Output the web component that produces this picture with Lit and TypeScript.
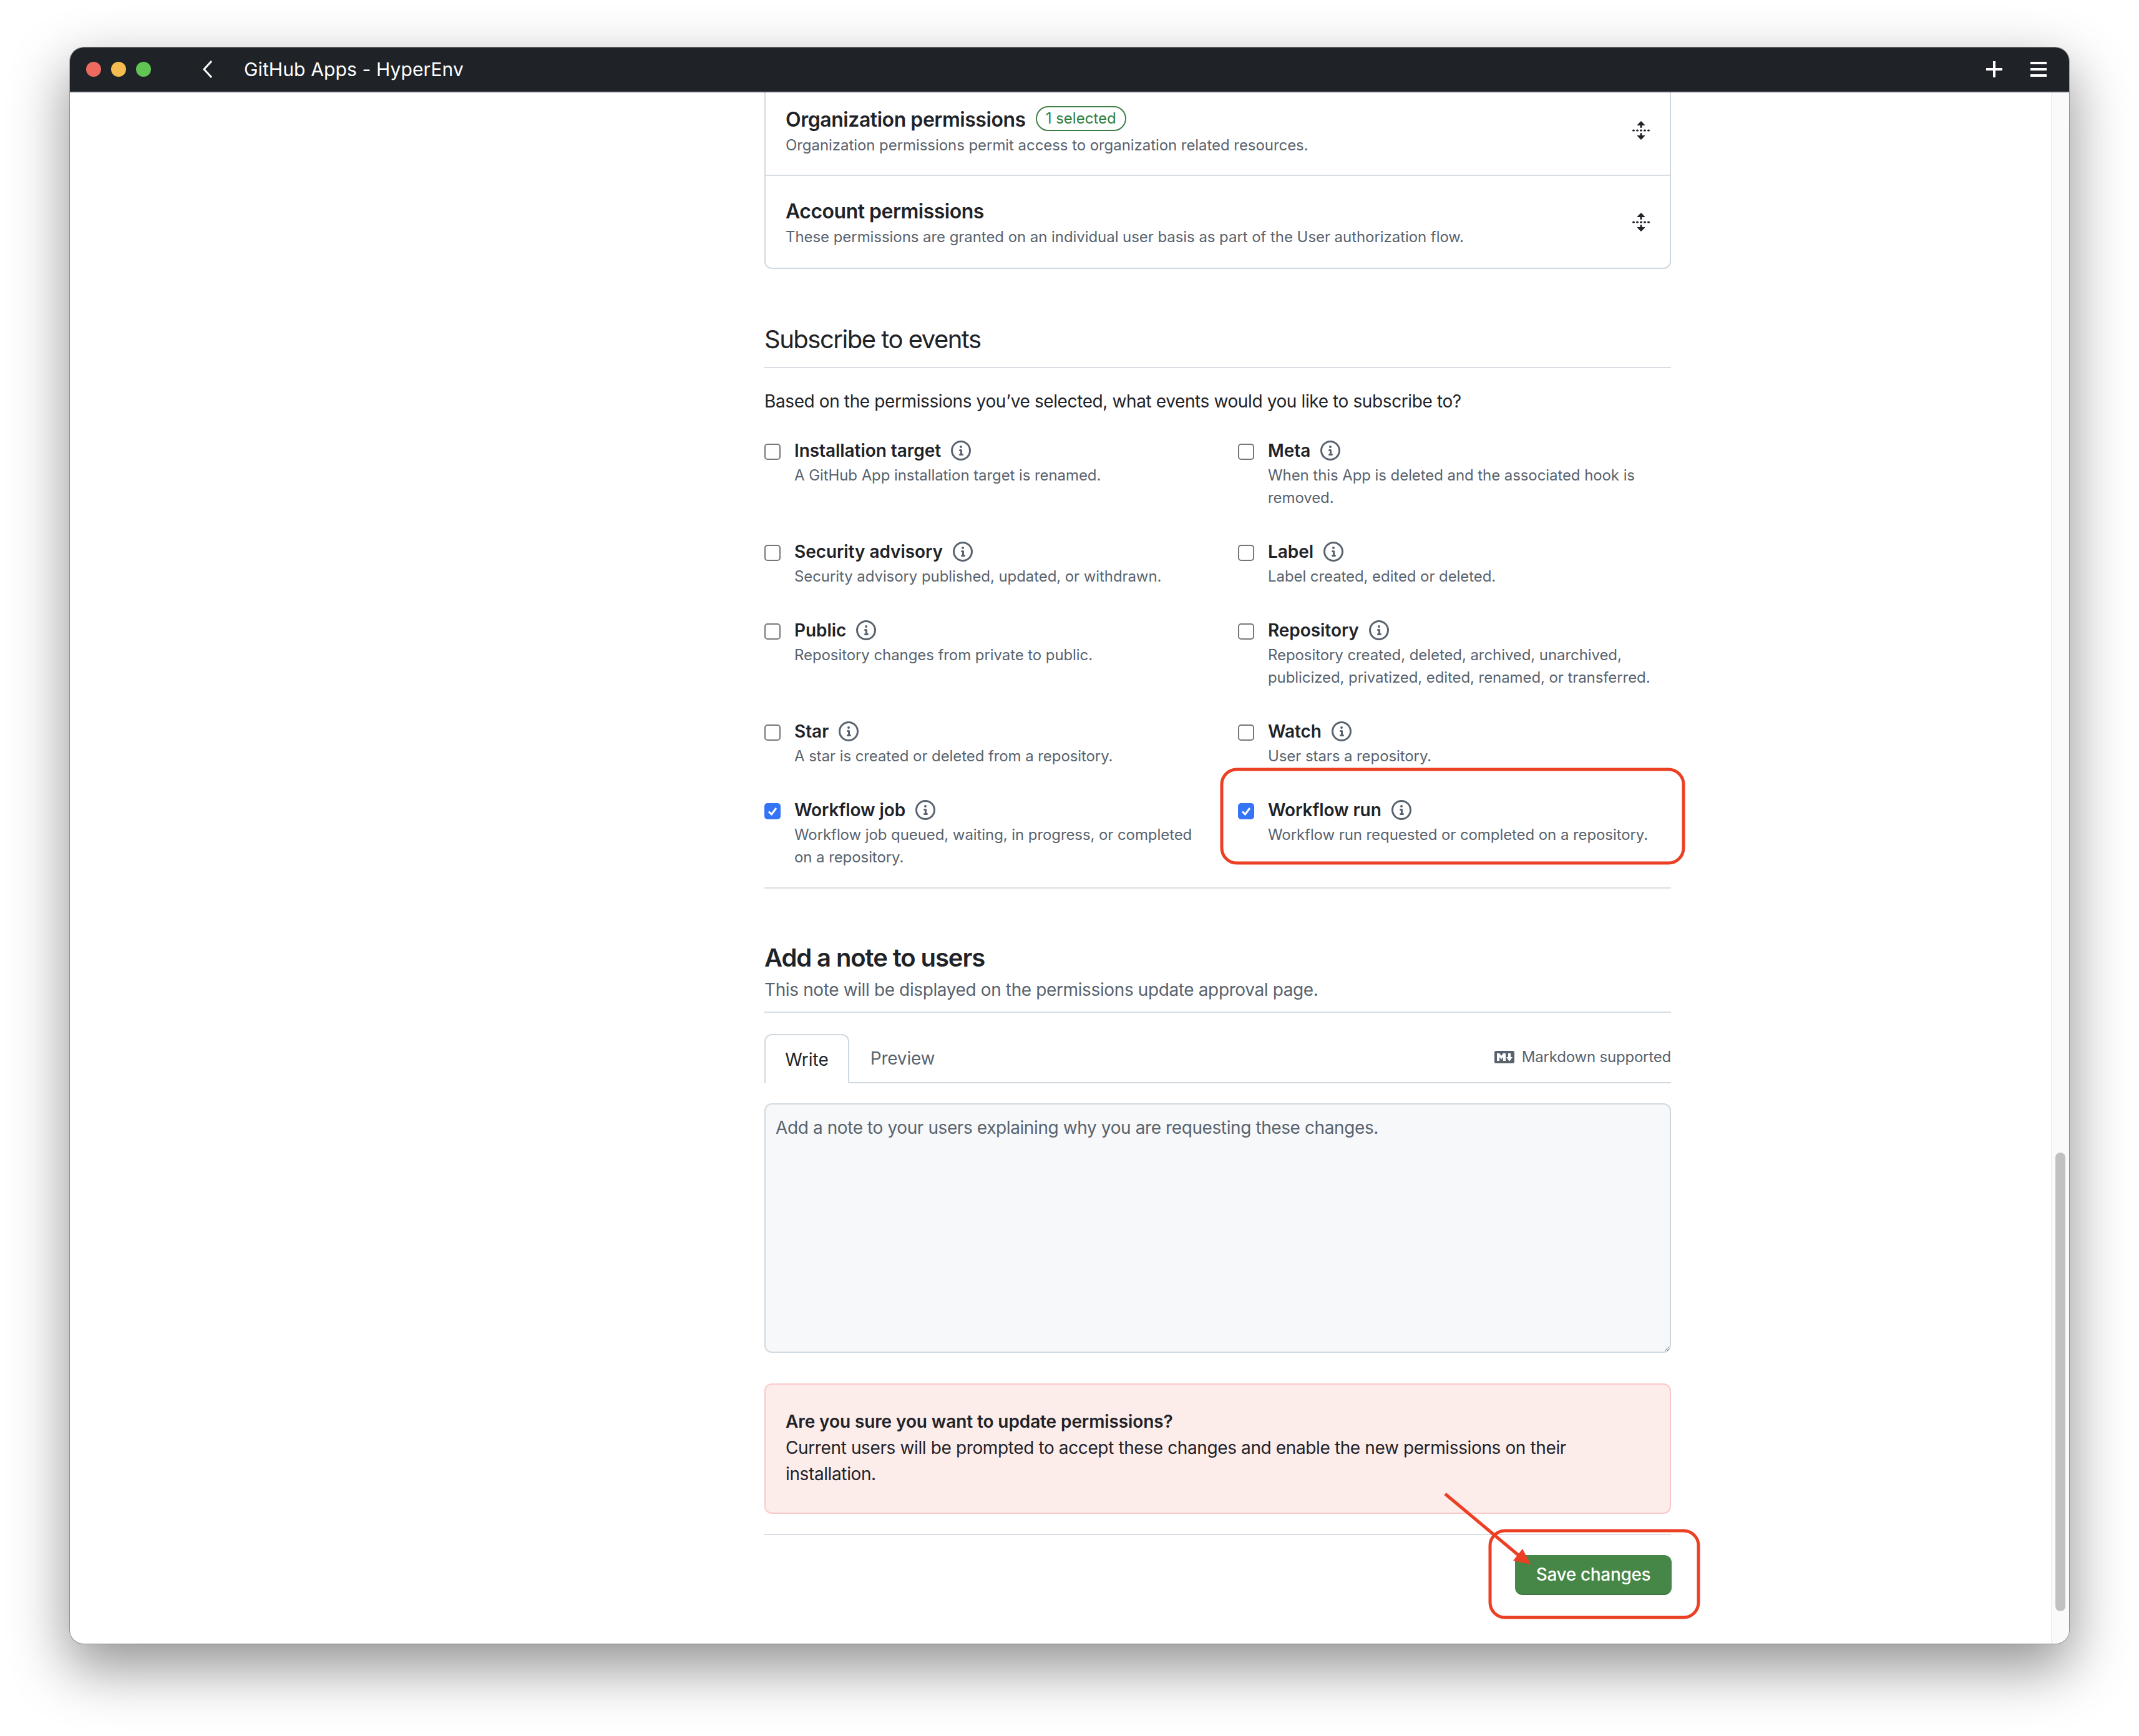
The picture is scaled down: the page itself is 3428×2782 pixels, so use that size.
import { LitElement, html, css, svg } from "lit";
import { customElement } from "lit/decorators.js";

const INFO = "M0 8a8 8 0 1 1 16 0A8 8 0 0 1 0 8Zm8-6.5a6.5 6.5 0 1 0 0 13 6.5 6.5 0 0 0 0-13ZM6.5 7.75A.75.75 0 0 1 7.25 7h1a.75.75 0 0 1 .75.75v2.75h.25a.75.75 0 0 1 0 1.5h-2a.75.75 0 0 1 0-1.5h.25v-2h-.25a.75.75 0 0 1-.75-.75ZM8 6a1 1 0 1 1 0-2 1 1 0 0 1 0 2Z";
const UNFOLD = "m8.177.677 2.896 2.896a.25.25 0 0 1-.177.427H8.75v1.25a.75.75 0 0 1-1.5 0V4H5.104a.25.25 0 0 1-.177-.427L7.823.677a.25.25 0 0 1 .354 0ZM7.25 10.75a.75.75 0 0 1 1.5 0V12h2.146a.25.25 0 0 1 .177.427l-2.896 2.896a.25.25 0 0 1-.354 0l-2.896-2.896A.25.25 0 0 1 5.104 12H7.25v-1.25Zm-5-2a.75.75 0 0 0 0-1.5h-.5a.75.75 0 0 0 0 1.5h.5ZM6 8a.75.75 0 0 1-.75.75h-.5a.75.75 0 0 1 0-1.5h.5A.75.75 0 0 1 6 8Zm2.25.75a.75.75 0 0 0 0-1.5h-.5a.75.75 0 0 0 0 1.5h.5ZM12 8a.75.75 0 0 1-.75.75h-.5a.75.75 0 0 1 0-1.5h.5A.75.75 0 0 1 12 8Zm2.25.75a.75.75 0 0 0 0-1.5h-.5a.75.75 0 0 0 0 1.5h.5Z";
const MD = "M14.85 3c.63 0 1.15.52 1.14 1.15v7.7c0 .63-.51 1.15-1.15 1.15H1.15C.52 13 0 12.48 0 11.84V4.15C0 3.52.52 3 1.15 3ZM9 11V5H7L5.5 7 4 5H2v6h2V8l1.5 1.92L7 8v3Zm2.99.5L14.5 8H13V5h-2v3H9.5Z";

const EVENTS: { t: string; d: string; c?: boolean }[] = [
  { t: "Installation target", d: "A GitHub App installation target is renamed." },
  { t: "Meta", d: "When this App is deleted and the associated hook is removed." },
  { t: "Security advisory", d: "Security advisory published, updated, or withdrawn." },
  { t: "Label", d: "Label created, edited or deleted." },
  { t: "Public", d: "Repository changes from private to public." },
  { t: "Repository", d: "Repository created, deleted, archived, unarchived, publicized, privatized, edited, renamed, or transferred." },
  { t: "Star", d: "A star is created or deleted from a repository." },
  { t: "Watch", d: "User stars a repository." },
  { t: "Workflow job", d: "Workflow job queued, waiting, in progress, or completed on a repository.", c: true },
  { t: "Workflow run", d: "Workflow run requested or completed on a repository.", c: true },
];

@customElement("app-root")
export class AppRoot extends LitElement {
  static styles = css`
    :host {
      display: block;
      position: relative;
      height: 2782px;
      box-sizing: border-box;
      padding: 76px 112px 148px;
      background: #fff;
      font-family: Inter, "Liberation Sans", sans-serif;
      color: #1f2328;
      overflow: hidden;
    }
    .window {
      height: 100%;
      display: flex;
      flex-direction: column;
      border-radius: 22px;
      overflow: hidden;
      background: #fff;
      box-shadow: 0 0 0 1px rgba(0,0,0,.28), 0 36px 90px 4px rgba(0,0,0,.42);
    }
    .bar {
      height: 70px;
      flex: none;
      background: #1f2328;
      border-bottom: 2px solid #3d444d;
      display: flex;
      align-items: center;
      color: #fff;
      padding: 0 36px 0 26px;
    }
    .dot { width: 24px; height: 24px; border-radius: 50%; margin-right: 16px; flex: none; }
    .back { margin-left: 64px; flex: none; width: 20px; height: 30px; }
    .title { margin-left: 49px; font-size: 30px; letter-spacing: 0.12px; flex: 1; }
    .plus { width: 28px; height: 28px; flex: none; margin-right: 44px; }
    .burger { width: 26px; height: 26px; flex: none; }
    .body { flex: 1; display: flex; min-height: 0; }
    .main { flex: 1; min-width: 0; padding-left: 1113px; box-sizing: border-box; overflow: hidden; }
    .col { width: 1453px; }
    .gutter {
      flex: none;
      box-sizing: border-box;
      width: 29px;
      background: #fafafa;
      border-left: 2px solid #efefef;
      display: flex;
      flex-direction: column;
      justify-content: flex-end;
      padding: 0 0 52px 5px;
    }
    .thumb { width: 16px; height: 735px; border-radius: 8px; background: #c1c1c1; }

    .card { border: 2px solid #d1d9e0; border-top: 0; border-radius: 0 0 12px 12px; }
    .perm { display: flex; align-items: center; padding: 37px 30px 31px 32px; }
    .perm.first { padding-top: 24px; padding-bottom: 29px; border-bottom: 2px solid #d8dee4; }
    .perm-text { flex: 1; }
    .perm-title { font-size: 32px; line-height: 40px; font-weight: 600; display: flex; align-items: center; letter-spacing: -0.45px; }
    .perm-title.acc { letter-spacing: -0.5px; }
    .perm-desc { font-size: 24px; line-height: 36px; color: #59636e; margin-top: 3px; letter-spacing: -0.06px; }
    .pill {
      margin: -4px 0 0 16px;
      font-size: 24px; line-height: 36px; font-weight: 400; letter-spacing: 0;
      color: #2f7d3a; border: 2px solid #3f7f45; border-radius: 20px; padding: 0 14px;
    }
    .unfold { width: 32px; height: 32px; fill: #1f2328; margin-bottom: 6px; flex: none; }

    h2 { margin: 0; font-size: 40px; line-height: 60px; }
    .h-sub { margin-top: 83px; font-weight: 400; padding-bottom: 14px; border-bottom: 2px solid #d8dee4; letter-spacing: -1.5px; }
    .lead { margin: 32px 0 38px; font-size: 28px; line-height: 42px; letter-spacing: -0.39px; }
    .events { display: grid; grid-template-columns: 759px 1fr; row-gap: 48px; }
    .event { position: relative; padding-left: 48px; }
    .check {
      position: absolute; left: 0; top: 9px;
      width: 26px; height: 26px; box-sizing: border-box;
      border: 2px solid #767676; border-radius: 5px; background: #fff;
    }
    .check.on { background: #3574f6; border-color: #3574f6; }
    .check svg { display: block; width: 22px; height: 22px; fill: none; stroke: #fff; stroke-width: 3; }
    .ev-title { font-size: 28px; line-height: 40px; font-weight: 600; display: flex; align-items: center; letter-spacing: -0.06px; }
    .info { width: 32px; height: 32px; fill: #59636e; margin-left: 16px; flex: none; }
    .ev-desc { font-size: 24px; line-height: 36px; color: #59636e; margin-top: 2px; max-width: 660px; letter-spacing: -0.08px; }

    .rule { height: 2px; background: #d8dee4; }
    .rule.a { margin-top: 30px; }
    .h-note { margin-top: 81px; font-weight: 600; letter-spacing: -1.1px; }
    .note-desc { font-size: 28px; line-height: 42px; color: #59636e; padding-bottom: 14px; border-bottom: 2px solid #d8dee4; letter-spacing: -0.38px; }
    .tabs { margin-top: 34px; display: flex; align-items: stretch; height: 79px; box-sizing: border-box; border-bottom: 2px solid #d1d9e0; }
    .tab { box-sizing: border-box; font-size: 28px; display: flex; align-items: center; justify-content: center; }
    .tab.on { width: 136px; height: 79px; border: 2px solid #d1d9e0; border-bottom: 0; border-radius: 12px 12px 0 0; background: #fff; }
    .tab.off { width: 171px; color: #59636e; letter-spacing: -0.2px; }
    .md { margin-left: auto; display: flex; align-items: center; gap: 12px; font-size: 24px; color: #59636e; padding-bottom: 4px; letter-spacing: -0.2px; }
    .md svg { width: 32px; height: 32px; fill: #59636e; }
    textarea {
      display: block; margin-top: 32px; width: 100%; height: 400px; box-sizing: border-box;
      background: #f6f8fa; border: 2px solid #d1d9e0; border-radius: 12px;
      padding: 16px; font: 28px/42px Inter, "Liberation Sans", sans-serif; color: #1f2328;
      letter-spacing: -0.4px;
      resize: both; outline: none;
    }
    textarea::placeholder { color: #59636e; opacity: 1; }
    .warn {
      margin-top: 49px; box-sizing: border-box; height: 209px;
      background: #fcecea; border: 2px solid #f9c9c9; border-radius: 12px;
      padding: 38px 32px 0; font-size: 28px; line-height: 42px; letter-spacing: -0.38px;
    }
    .warn b { font-weight: 600; display: block; letter-spacing: -0.1px; }
    .rule.b { margin-top: 32px; }
    .actions { margin-top: 32px; display: flex; justify-content: flex-end; }
    button {
      width: 251px; height: 64px; box-sizing: border-box; margin-right: -1px;
      background: #468647; color: #fff; border: 0; border-bottom: 2px solid #3d763f; border-radius: 12px;
      font: 500 28px Inter, "Liberation Sans", sans-serif; padding: 0; letter-spacing: -0.35px;
    }
    .marks { position: absolute; left: 0; top: 0; width: 3428px; height: 2782px; pointer-events: none; }
  `;

  render() {
    return html`
      <div class="window">
        <div class="bar">
          <span class="dot" style="background:#ee6a5f"></span>
          <span class="dot" style="background:#f5bd4f"></span>
          <span class="dot" style="background:#61c554"></span>
          <svg class="back" viewBox="0 0 20 30" fill="none" stroke="#fff" stroke-width="3"><path d="M17 2 L5 15 L17 28" /></svg>
          <span class="title">GitHub Apps - HyperEnv</span>
          <svg class="plus" viewBox="0 0 28 28" fill="#fff"><path d="M12 1h4v11h11v4H16v11h-4V16H1v-4h11z" /></svg>
          <svg class="burger" viewBox="0 0 26 26" fill="#fff"><path d="M0 1h26v4H0zM0 11h26v4H0zM0 21h26v4H0z" /></svg>
        </div>
        <div class="body">
          <div class="main"><div class="col">
            <div class="card">
              <div class="perm first">
                <div class="perm-text">
                  <div class="perm-title">Organization permissions <span class="pill">1 selected</span></div>
                  <div class="perm-desc">Organization permissions permit access to organization related resources.</div>
                </div>
                <svg class="unfold" viewBox="0 0 16 16"><path d=${UNFOLD} /></svg>
              </div>
              <div class="perm">
                <div class="perm-text">
                  <div class="perm-title acc">Account permissions</div>
                  <div class="perm-desc">These permissions are granted on an individual user basis as part of the User authorization flow.</div>
                </div>
                <svg class="unfold" viewBox="0 0 16 16"><path d=${UNFOLD} /></svg>
              </div>
            </div>

            <h2 class="h-sub">Subscribe to events</h2>
            <div class="lead">Based on the permissions you’ve selected, what events would you like to subscribe to?</div>
            <div class="events">
              ${EVENTS.map((e) => html`
                <div class="event">
                  <span class="check ${e.c ? "on" : ""}">${e.c ? html`<svg viewBox="0 0 22 22"><path d="M5 11.5 L9.5 16 L17 6" /></svg>` : ""}</span>
                  <div class="ev-title">${e.t}<svg class="info" viewBox="0 0 16 16"><path d=${INFO} /></svg></div>
                  <div class="ev-desc">${e.d}</div>
                </div>`)}
            </div>
            <div class="rule a"></div>

            <h2 class="h-note">Add a note to users</h2>
            <div class="note-desc">This note will be displayed on the permissions update approval page.</div>
            <div class="tabs">
              <div class="tab on">Write</div>
              <div class="tab off">Preview</div>
              <div class="md"><svg viewBox="0 0 16 16"><path d=${MD} /></svg>Markdown supported</div>
            </div>
            <textarea placeholder="Add a note to your users explaining why you are requesting these changes."></textarea>
            <div class="warn">
              <b>Are you sure you want to update permissions?</b>
              Current users will be prompted to accept these changes and enable the new permissions on their installation.
            </div>
            <div class="rule b"></div>
            <div class="actions"><button>Save changes</button></div>
          </div></div>
          <div class="gutter"><div class="thumb"></div></div>
        </div>
      </div>
      <svg class="marks" viewBox="0 0 3428 2782" fill="none" stroke="#ec4024" stroke-width="5">
        ${svg`
          <rect x="1958" y="1233" width="740" height="150" rx="24" />
          <rect x="2388" y="2453" width="334" height="139" rx="24" />
          <path d="M2316 2394 L2438 2496" />
          <path d="M2440 2482 L2425 2501 L2453 2507 Z" fill="#ec4024" stroke="none" />
        `}
      </svg>
    `;
  }
}
